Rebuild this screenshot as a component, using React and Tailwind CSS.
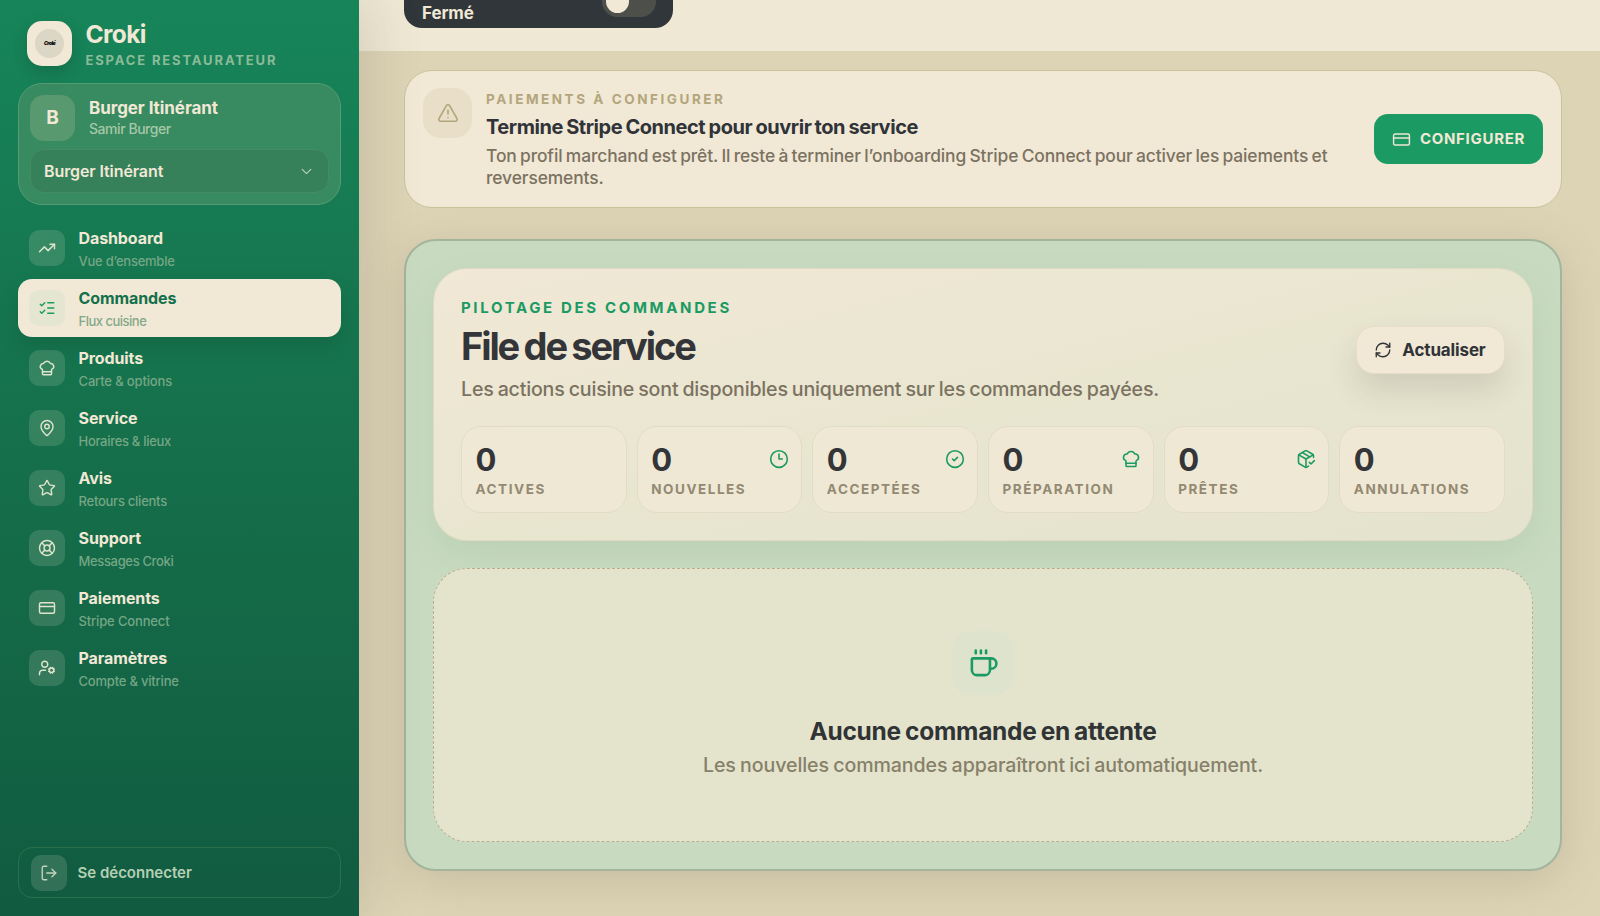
import React from 'react';
import {
    TrendingUp,
    ListChecks,
    ChefHat,
    MapPin,
    Star,
    LifeBuoy,
    CreditCard,
    UserCog,
    LogOut,
    ChevronDown,
    TriangleAlert,
    RefreshCw,
    Clock3,
    CircleCheck,
    PackageCheck,
    Coffee
} from 'lucide-react';

const navItems = [
    { title: 'Dashboard', hint: 'Vue d’ensemble', icon: TrendingUp, hintSpacing: 'tracking-[-0.25px]' },
    { title: 'Commandes', hint: 'Flux cuisine', icon: ListChecks, active: true, hintSpacing: 'tracking-[-0.5px]' },
    { title: 'Produits', hint: 'Carte & options', icon: ChefHat, hintSpacing: 'tracking-[-0.15px]' },
    { title: 'Service', hint: 'Horaires & lieux', icon: MapPin, hintSpacing: 'tracking-[-0.3px]' },
    { title: 'Avis', hint: 'Retours clients', icon: Star, hintSpacing: 'tracking-[-0.25px]' },
    { title: 'Support', hint: 'Messages Croki', icon: LifeBuoy, hintSpacing: 'tracking-[-0.35px]' },
    { title: 'Paiements', hint: 'Stripe Connect', icon: CreditCard, hintSpacing: 'tracking-[-0.15px]' },
    { title: 'Paramètres', hint: 'Compte & vitrine', icon: UserCog, hintSpacing: 'tracking-[-0.2px]' }
];

const stats = [
    { label: 'Actives', value: 0 },
    { label: 'Nouvelles', value: 0, icon: Clock3 },
    { label: 'Acceptées', value: 0, icon: CircleCheck },
    { label: 'Préparation', value: 0, icon: ChefHat },
    { label: 'Prêtes', value: 0, icon: PackageCheck },
    { label: 'Annulations', value: 0 }
];

const NavItem = ({ item }) => {
    const Icon = item.icon;

    return (
        <a
            className={`flex h-[58px] items-center gap-[13.5px] rounded-[14px] pl-[11px] ${
                item.active ? 'bg-[#f1e8d6] shadow-[0_10px_20px_rgba(10,60,40,0.2)]' : ''
            }`}
        >
            <span
                className={`flex h-9 w-9 items-center justify-center rounded-[10px] ${
                    item.active ? 'bg-[#e5e6d1] text-[#1b9b63]' : 'bg-[#f1e8d6]/15 text-[#dfe4cd]'
                }`}
            >
                <Icon size={18} strokeWidth={1.9} />
            </span>
            <span className="flex flex-col pt-[2px]">
                <span
                    className={`text-[16px] leading-6 font-bold tracking-[-0.1px] ${
                        item.active ? 'text-[#13704a]' : 'text-[#f1e8d6]'
                    }`}
                >
                    {item.title}
                </span>
                <span
                    className={`mt-px text-[13px] leading-[21px] font-medium ${item.hintSpacing} ${
                        item.active ? 'text-[#83a888]' : 'text-[#75a685]'
                    }`}
                >
                    {item.hint}
                </span>
            </span>
        </a>
    );
};

const Sidebar = () => (
    <aside className="relative flex h-full w-[359px] shrink-0 flex-col bg-linear-to-b from-[#178559] via-[#156f4a] to-[#115b41] px-[18px] pt-5 pb-[18px] shadow-[10px_0_50px_rgba(90,70,60,0.16)]">
        <div className="flex h-[46px] items-center gap-[13.5px] pl-[9px]">
            <div className="flex h-[45px] w-[45px] items-center justify-center rounded-[15px] bg-[#f1e8d6] shadow-[0_6px_14px_rgba(10,60,40,0.25)]">
                <div className="flex h-[29px] w-[29px] items-center justify-center rounded-full bg-[#dcd6c6]">
                    <span className="text-[5px] leading-none font-black tracking-[-0.5px] text-black italic">Croki</span>
                </div>
            </div>
            <div className="pt-[2px]">
                <div className="text-[24.5px] leading-[30px] font-bold tracking-[-0.6px] text-[#f1e8d6]">Croki</div>
                <div className="mt-[2px] text-[13px] leading-[18px] font-bold tracking-[1.85px] whitespace-nowrap text-[#8cbb98] uppercase">
                    Espace restaurateur
                </div>
            </div>
        </div>

        <div className="mt-[17px] h-[122px] rounded-[24px] border border-[#569b74] bg-[#388a60] px-[11px] py-[11px]">
            <div className="flex items-center gap-[14px]">
                <div className="flex h-[46px] w-[45px] items-center justify-center rounded-[14px] bg-[#58996f] text-[19px] font-bold text-[#f1e8d6]">
                    B
                </div>
                <div className="-mt-px">
                    <div className="text-[17px] leading-[22px] font-bold tracking-[-0.07px] text-[#f1e8d6]">Burger Itinérant</div>
                    <div className="mt-px text-[14px] leading-[18px] font-medium tracking-[-0.45px] text-[#a5c8a8]">
                        Samir Burger
                    </div>
                </div>
            </div>
            <div className="mt-2 flex h-[44px] items-center justify-between rounded-[14px] border border-[#438c64] bg-[#36805a] pr-[13px] pl-[13px]">
                <span className="text-[16px] font-semibold tracking-[-0.1px] text-[#f1e8d6]">Burger Itinérant</span>
                <ChevronDown size={17} strokeWidth={1.8} className="text-[#b4cfb2]" />
            </div>
        </div>

        <nav className="mt-[14px] flex flex-1 flex-col gap-[2px]">
            {navItems.map((item) => (
                <NavItem key={item.title} item={item} />
            ))}
        </nav>

        <button className="flex h-[51px] items-center gap-[11px] rounded-[14px] border border-[#2a704f] pl-[11.5px]">
            <span className="flex h-9 w-9 items-center justify-center rounded-[10px] bg-[#f1e8d6]/15 text-[#c3d5bd]">
                <LogOut size={18} strokeWidth={1.8} />
            </span>
            <span className="pt-[2px] text-[15px] font-semibold text-[#b5cfb4]">Se déconnecter</span>
        </button>
    </aside>
);

const StatusBar = () => (
    <header className="flex h-[51px] items-start bg-[#efe8d4] pl-[45px]">
        <div className="flex h-7 w-[269px] items-start justify-between overflow-hidden rounded-b-[18px] bg-[#303639] pr-[17px] pl-[18px]">
            <span className="pt-[2px] text-[17px] leading-[22px] font-bold tracking-[-0.1px] text-[#f1e8d6]">Fermé</span>
            <span className="-mt-[14px] flex h-[31px] w-[54px] items-center rounded-full bg-[#4d4f4b] pl-1">
                <span className="h-[23px] w-[23px] rounded-full bg-[#f1e8d6]" />
            </span>
        </div>
    </header>
);

const PaymentBanner = () => (
    <section className="flex h-[138px] items-center rounded-[28px] border border-[#cbc19b] bg-[#f1e8d6] px-[18px]">
        <div className="mt-[17px] flex h-[50px] w-[49px] shrink-0 items-center justify-center self-start rounded-[18px] bg-[#e9dfc8] text-[#b3a67c]">
            <TriangleAlert size={22} strokeWidth={1.8} />
        </div>
        <div className="ml-[14px] w-[860px]">
            <div className="-mt-px text-[13.5px] leading-5 font-bold tracking-[2.55px] text-[#b3a67c] uppercase">
                Paiements à configurer
            </div>
            <h2 className="mt-1 text-[20px] leading-7 font-bold tracking-[-0.45px] [word-spacing:-1px] text-[#303337]">
                Termine Stripe Connect pour ouvrir ton service
            </h2>
            <p className="mt-1 text-[17.4px] leading-[22px] font-medium tracking-[-0.1px] [word-spacing:-1.2px] text-[#7b7261]">
                Ton profil marchand est prêt. Il reste à terminer l’onboarding Stripe Connect pour activer les paiements et
                <br />
                reversements.
            </p>
        </div>
        <button className="ml-auto flex h-[50px] w-[169px] shrink-0 items-center justify-center gap-[9px] rounded-[14px] bg-[#1b9b63] text-[#f1e8d6]">
            <CreditCard size={19} strokeWidth={1.8} />
            <span className="pt-px text-[15px] font-bold tracking-[0.7px] uppercase">Configurer</span>
        </button>
    </section>
);

const StatCard = ({ stat }) => {
    const Icon = stat.icon;

    return (
        <div className="h-[87px] rounded-[20px] border border-[#e3dcc5] bg-[#efe8d4] pt-[15px] pr-3 pl-[13.5px]">
            <div className="flex h-9 items-center justify-between">
                <span className="text-[31px] leading-9 font-bold text-[#343538]">{stat.value}</span>
                {Icon && <Icon size={20} strokeWidth={1.9} className="-mt-[2px] text-[#1b9b63]" />}
            </div>
            <div className="mt-px text-[13.5px] leading-5 font-bold tracking-[1.55px] whitespace-nowrap text-[#938973] uppercase">
                {stat.label}
            </div>
        </div>
    );
};

const OrdersOverview = () => (
    <section className="h-[273px] rounded-[34px] border border-[#dfdcc3] bg-linear-to-br from-[#f1e8d6] via-[#e9e6d0] to-[#e4e3cd] px-[27px] pt-[29px] shadow-[0_14px_34px_rgba(90,120,90,0.1)]">
        <div className="flex items-center justify-between">
            <div>
                <div className="text-[15px] leading-5 font-bold tracking-[2.65px] text-[#1b9b63] uppercase">
                    Pilotage des commandes
                </div>
                <h1 className="mt-[6px] text-[38px] leading-[44px] font-bold tracking-[-2.1px] [word-spacing:-1.5px] text-[#343538]">
                    File de service
                </h1>
                <p className="mt-[7px] text-[19.6px] leading-7 font-medium tracking-[-0.18px] [word-spacing:-1px] text-[#7b7261]">
                    Les actions cuisine sont disponibles uniquement sur les commandes payées.
                </p>
            </div>
            <button className="-mt-[2px] flex h-12 w-[149px] items-center justify-center gap-[10px] rounded-[18px] border border-[#e6dcc7] bg-[#f1e8d6] pr-px text-[#303337] shadow-[0_16px_30px_rgba(50,50,40,0.13)]">
                <RefreshCw size={18} strokeWidth={1.8} />
                <span className="pt-[2px] text-[17px] font-bold tracking-[-0.15px]">Actualiser</span>
            </button>
        </div>
        <div className="mt-[23px] grid grid-cols-6 gap-[10px]">
            {stats.map((stat) => (
                <StatCard key={stat.label} stat={stat} />
            ))}
        </div>
    </section>
);

const EmptyQueue = () => (
    <section className="mt-[27px] flex h-[274px] flex-col items-center justify-center rounded-[34px] border border-dashed border-[#b9ae90] bg-[#e4e4cd]">
        <div className="flex h-[64px] w-[62px] items-center justify-center rounded-[20px] bg-[#dde3cc] text-[#1b9b63]">
            <Coffee size={31} strokeWidth={2} />
        </div>
        <h3 className="mt-5 text-[24.5px] leading-8 font-bold tracking-[-0.25px] [word-spacing:-1.5px] text-[#303435]">
            Aucune commande en attente
        </h3>
        <p className="mt-1 text-[19.6px] leading-7 font-medium tracking-[-0.08px] [word-spacing:-1px] text-[#878069]">
            Les nouvelles commandes apparaîtront ici automatiquement.
        </p>
    </section>
);

const App = () => {
    return (
        <div className="flex h-[916px] w-full overflow-hidden bg-[#ddd4b6] font-['Inter',sans-serif]">
            <div className="z-10 h-full shrink-0">
                <Sidebar />
            </div>
            <div className="min-w-0 flex-1">
                <StatusBar />
                <main className="pt-[19px] pr-[38px] pl-[45px]">
                    <PaymentBanner />
                    {/* Orders board */}
                    <div className="mt-[31px] h-[632px] rounded-[32px] border-2 border-[#a3b59a] bg-[#c8dbc0] px-[27px] pt-[27px] shadow-[0_10px_45px_rgba(110,90,70,0.2)]">
                        <OrdersOverview />
                        <EmptyQueue />
                    </div>
                </main>
            </div>
        </div>
    );
};

export default App;
